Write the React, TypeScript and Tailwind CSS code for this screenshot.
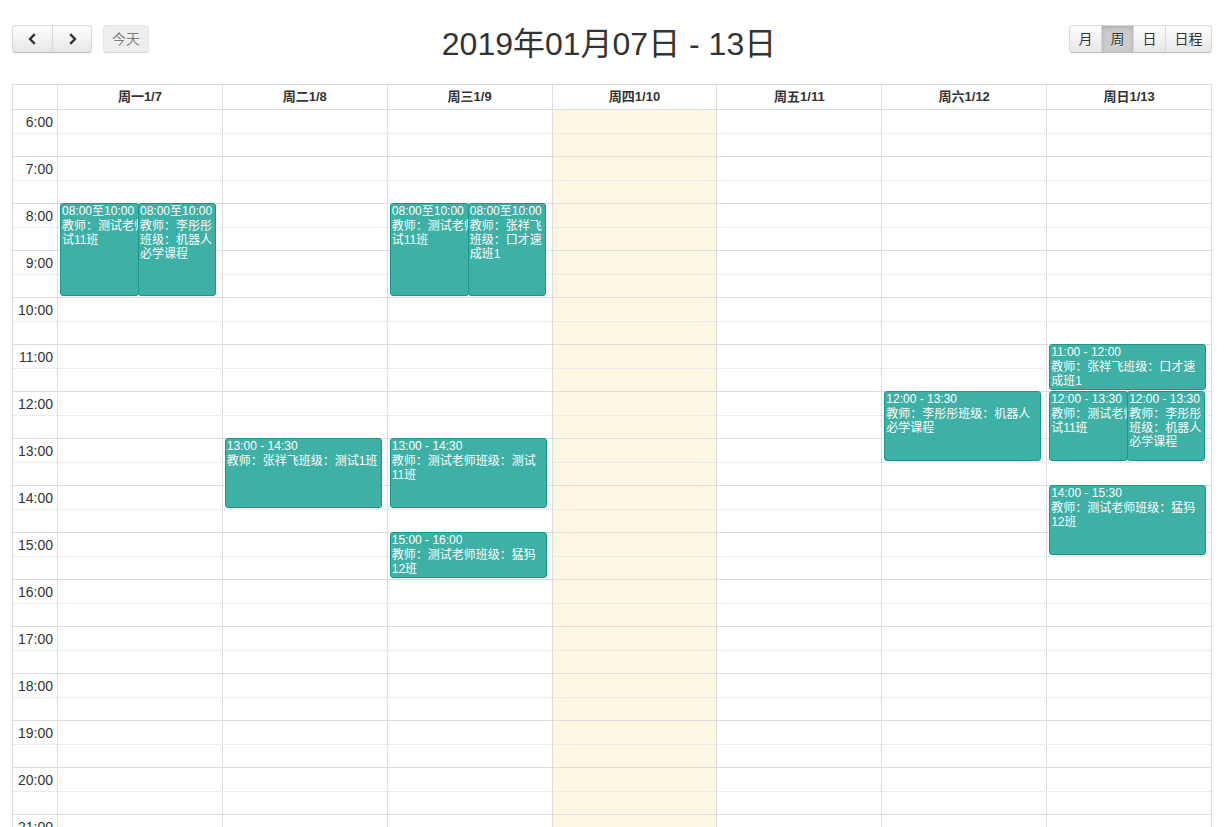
import React from 'react';

type Ev = { day: number; s: number; e: number; col: 0 | 1 | 2; lines: string[] };

const DAYS = ['周一1/7', '周二1/8', '周三1/9', '周四1/10', '周五1/11', '周六1/12', '周日1/13'];
const TODAY = 3;

const EVENTS: Ev[] = [
  { day: 0, s: 8, e: 10, col: 1, lines: ['08:00至10:00', '教师：测试老师', '试11班'] },
  { day: 0, s: 8, e: 10, col: 2, lines: ['08:00至10:00', '教师：李彤彤', '班级：机器人', '必学课程'] },
  { day: 1, s: 13, e: 14.5, col: 0, lines: ['13:00 - 14:30', '教师：张祥飞班级：测试1班'] },
  { day: 2, s: 8, e: 10, col: 1, lines: ['08:00至10:00', '教师：测试老师', '试11班'] },
  { day: 2, s: 8, e: 10, col: 2, lines: ['08:00至10:00', '教师：张祥飞', '班级：口才速', '成班1'] },
  { day: 2, s: 13, e: 14.5, col: 0, lines: ['13:00 - 14:30', '教师：测试老师班级：测试', '11班'] },
  { day: 2, s: 15, e: 16, col: 0, lines: ['15:00 - 16:00', '教师：测试老师班级：猛犸', '12班'] },
  { day: 5, s: 12, e: 13.5, col: 0, lines: ['12:00 - 13:30', '教师：李彤彤班级：机器人', '必学课程'] },
  { day: 6, s: 11, e: 12, col: 0, lines: ['11:00 - 12:00', '教师：张祥飞班级：口才速', '成班1'] },
  { day: 6, s: 12, e: 13.5, col: 1, lines: ['12:00 - 13:30', '教师：测试老师', '试11班'] },
  { day: 6, s: 12, e: 13.5, col: 2, lines: ['12:00 - 13:30', '教师：李彤彤', '班级：机器人', '必学课程'] },
  { day: 6, s: 14, e: 15.5, col: 0, lines: ['14:00 - 15:30', '教师：测试老师班级：猛犸', '12班'] },
];

const HOURS = Array.from({ length: 17 }, (_, i) => i + 6);
const HOUR_PX = 47;

const btnBase =
  'h-[28px] flex items-center justify-center text-[14px] text-[#333] border border-[#d9d9d9] border-b-[#bfbfbf] [text-shadow:0_1px_1px_rgba(255,255,255,0.75)]';
const btnDefault =
  'bg-linear-to-b from-white to-[#e6e6e6] shadow-[inset_0_1px_0_rgba(255,255,255,0.2),0_1px_2px_rgba(0,0,0,0.05)]';
const btnActive = 'bg-[#cccccc] shadow-[inset_0_2px_4px_rgba(0,0,0,0.15),0_1px_2px_rgba(0,0,0,0.05)]';

function Chevron({ dir }: { dir: 'l' | 'r' }) {
  return (
    <svg width="9" height="12" viewBox="0 0 9 12">
      <polyline
        points={dir === 'l' ? '6.8,1.2 2,6 6.8,10.8' : '2.2,1.2 7,6 2.2,10.8'}
        fill="none"
        stroke="#333"
        strokeWidth="2.4"
        strokeLinejoin="miter"
      />
    </svg>
  );
}

function EventBox({ ev }: { ev: Ev }) {
  const top = (ev.s - 6) * HOUR_PX - 1;
  const height = (ev.e - ev.s) * HOUR_PX - 1;
  let left = 2;
  let width = 157;
  if (ev.col === 1) {
    left = 2;
    width = 79;
  } else if (ev.col === 2) {
    left = 80;
    width = 78;
  }
  return (
    <div
      className="absolute bg-[#3eb0a5] border border-[#15998a] rounded-[3px] overflow-hidden text-white text-[12px] pl-[1px]"
      style={{ top, height, left, width }}
    >
      <div className="leading-[15px] whitespace-nowrap">{ev.lines[0]}</div>
      {ev.lines.slice(1).map((l, i) => (
        <div key={i} className="leading-[14px] whitespace-nowrap">
          {l}
        </div>
      ))}
    </div>
  );
}

export default function App() {
  return (
    <div className="min-h-screen bg-white text-[#333] font-['Liberation_Sans','Noto_Sans_CJK_SC',sans-serif] pt-[25px]">
      {/* toolbar */}
      <div className="ml-[12px] w-[1200px] h-[59px] flex items-start">
        <div className="flex items-start w-[137px]">
          <button className={`${btnBase} ${btnDefault} w-[41px] rounded-l-[4px]`}>
            <Chevron dir="l" />
          </button>
          <button className={`${btnBase} ${btnDefault} w-[40px] -ml-px rounded-r-[4px]`}>
            <Chevron dir="r" />
          </button>
          <button
            className={`${btnBase} w-[46px] ml-[11px] rounded-[4px] bg-[#e6e6e6] opacity-65 shadow-[0_1px_2px_rgba(0,0,0,0.05)]`}
          >
            今天
          </button>
        </div>
        <div className="flex-1 flex justify-center">
          <h2 className="m-0 mt-[1px] text-[32px] leading-[36px] font-normal text-[#333] whitespace-nowrap">
            2019年01月07日 - 13日
          </h2>
        </div>
        <div className="flex items-start">
          <button className={`${btnBase} ${btnDefault} w-[33px] rounded-l-[4px]`}>月</button>
          <button className={`${btnBase} ${btnActive} w-[33px] -ml-px`}>周</button>
          <button className={`${btnBase} ${btnDefault} w-[33px] -ml-px`}>日</button>
          <button className={`${btnBase} ${btnDefault} w-[47px] -ml-px rounded-r-[4px]`}>日程</button>
        </div>
      </div>

      {/* calendar */}
      <div className="ml-[12px] w-[1200px] border border-[#ddd]">
        <div className="grid grid-cols-[44px_repeat(7,minmax(0,1fr))] h-[25px] border-b border-[#ddd]">
          <div />
          {DAYS.map((d) => (
            <div
              key={d}
              className="border-l border-[#ddd] flex items-center justify-center text-[13px] font-bold text-[#333]"
            >
              {d}
            </div>
          ))}
        </div>

        <div className="relative">
          {/* background columns */}
          <div className="absolute inset-0 grid grid-cols-[44px_repeat(7,minmax(0,1fr))]">
            <div />
            {DAYS.map((d, i) => (
              <div key={d} className={`border-l border-[#ddd] ${i === TODAY ? 'bg-[#fcf8e3]' : ''}`} />
            ))}
          </div>

          {/* slats */}
          <div className="relative">
            {HOURS.map((h) => (
              <div key={h}>
                <div className="h-[24px] border-b border-dotted border-[#ddd] flex">
                  <div className="w-[44px] text-right pr-[4px] pt-[2px] text-[14px] leading-[20px] text-[#333]">
                    {h}:00
                  </div>
                </div>
                <div className="h-[23px] border-b border-[#ddd]" />
              </div>
            ))}
          </div>

          {/* events */}
          <div className="absolute inset-0 grid grid-cols-[44px_repeat(7,minmax(0,1fr))]">
            <div />
            {DAYS.map((d, i) => (
              <div key={d} className="relative border-l border-transparent">
                {EVENTS.filter((e) => e.day === i).map((ev, k) => (
                  <EventBox key={k} ev={ev} />
                ))}
              </div>
            ))}
          </div>
        </div>
      </div>
    </div>
  );
}
